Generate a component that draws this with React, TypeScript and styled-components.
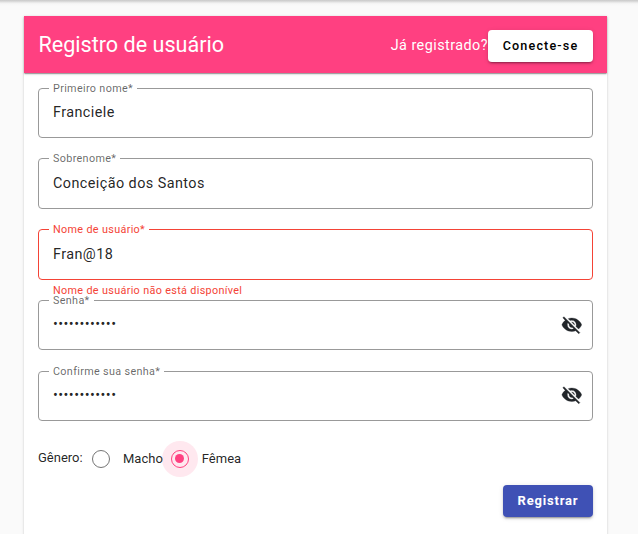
import React from "react";
import styled, { createGlobalStyle } from "styled-components";

const GlobalStyle = createGlobalStyle`
  *, *::before, *::after { box-sizing: border-box; }
  html, body { margin: 0; height: 100%; overflow: hidden; }
  body {
    background: #fafafa;
    color: rgba(0, 0, 0, 0.87);
    font-family: Roboto, "Open Sans", sans-serif;
  }
`;

const Page = styled.div`
  height: 534px;
  padding: 16px 31px 0 24px;
  overflow: hidden;
  background: linear-gradient(#cacaca 0, #d3d3d3 1px, #e2e2e2 2px, #f0f0f0 3px, #f7f7f7 4px, #fafafa 6px);
`;

const Card = styled.main`
  height: 560px;
  background: #fff;
  box-shadow: 0 2px 1px -1px rgba(0, 0, 0, 0.2), 0 1px 1px rgba(0, 0, 0, 0.14), 0 1px 3px rgba(0, 0, 0, 0.12);
`;

const Header = styled.header`
  height: 57px;
  padding: 2px 14px 0 14.4px;
  display: flex;
  align-items: center;
  background: #ff4081;
  color: #fff;
  box-shadow: 0 2px 1px -1px rgba(0, 0, 0, 0.2), 0 1px 1px rgba(0, 0, 0, 0.14), 0 1px 3px rgba(0, 0, 0, 0.12);
`;

const Title = styled.h1`
  margin: -2px auto 0 0;
  font-size: 21.6px;
  font-weight: 400;
  line-height: 29px;
`;

const Prompt = styled.span`
  font-size: 14.4px;
  letter-spacing: 0.45px;
`;

const Button = styled.button<{ $primary?: boolean }>`
  flex: none;
  width: ${(p) => (p.$primary ? 90 : 105)}px;
  height: 32px;
  padding: 0;
  border: 0;
  border-radius: 4px;
  background: ${(p) => (p.$primary ? "#3f51b5" : "#fff")};
  color: ${(p) => (p.$primary ? "#fff" : "#000")};
  font-family: inherit;
  font-size: ${(p) => (p.$primary ? 13 : 12.6)}px;
  font-weight: ${(p) => (p.$primary ? 700 : 500)};
  letter-spacing: ${(p) => (p.$primary ? 0.8 : 1.15)}px;
  box-shadow: 0 3px 1px -2px rgba(0, 0, 0, 0.2), 0 2px 2px rgba(0, 0, 0, 0.14), 0 1px 5px rgba(0, 0, 0, 0.12);
`;

const Form = styled.form`
  padding: 14.6px 14px 0;
`;

const Fields = styled.div`
  display: grid;
  grid-auto-rows: 70.8px;
`;

const Outline = styled.fieldset<{ $error?: boolean }>`
  min-width: 0;
  height: 50.4px;
  margin: 0;
  padding: 0 10px;
  border: 1px solid ${(p) => (p.$error ? "#f44336" : "#999")};
  border-radius: 4px;
  color: ${(p) => (p.$error ? "#f44336" : "rgba(0, 0, 0, 0.6)")};
`;

const Legend = styled.legend`
  height: 1px;
  padding: 0 4px;
  font-size: 10.8px;
  line-height: 1px;
  letter-spacing: 0.34px;
  white-space: nowrap;
`;

const Control = styled.div`
  display: flex;
  align-items: center;
  height: 47.8px;
  padding: 0 0 0 4px;
`;

const Input = styled.input`
  flex: 1;
  min-width: 0;
  height: 22px;
  padding: 0;
  border: 0;
  outline: 0;
  background: transparent;
  color: rgba(0, 0, 0, 0.87);
  font-family: inherit;
  font-size: 14.4px;
  letter-spacing: 0.43px;
`;

const EyeIcon = styled.svg`
  flex: none;
  width: 21.6px;
  height: 21.6px;
  margin: -1px -0.4px 0 0;
  fill: #212529;
  stroke: #212529;
  stroke-width: 0.35;
`;

const ErrorText = styled.div`
  padding: 4px 15px 0;
  color: #f44336;
  font-size: 10.8px;
  line-height: 13px;
  letter-spacing: 0.34px;
`;

const GenderRow = styled.div`
  display: flex;
  align-items: center;
  height: 36px;
  margin-top: -0.6px;
  font-size: 13px;
`;

const GenderLabel = styled.span`
  width: 45px;
  padding-bottom: 3px;
  white-space: nowrap;
`;

const Option = styled.label`
  display: flex;
  align-items: center;
`;

const Ripple = styled.span<{ $checked?: boolean }>`
  display: grid;
  place-items: center;
  width: 36px;
  height: 36px;
  margin-left: ${(p) => (p.$checked ? -1 : 0)}px;
  border-radius: 50%;
  background: ${(p) => (p.$checked ? "#ffe8ef" : "transparent")};
`;

const Radio = styled.input`
  appearance: none;
  display: grid;
  place-items: center;
  width: 18px;
  height: 18px;
  margin: 0;
  border: 1px solid #757575;
  border-radius: 50%;
  &:checked { border-color: #ff4081; }
  &:checked::before {
    content: "";
    width: 9px;
    height: 9px;
    border-radius: 50%;
    background: #ff4081;
  }
`;

const OptionText = styled.span`
  position: relative;
  padding-left: 4px;
`;

const Actions = styled.div`
  display: flex;
  justify-content: flex-end;
  margin-top: 8px;
`;

type Field = { label: string; value: string; error?: string; secret?: boolean };

const fields: Field[] = [
  { label: "Primeiro nome*", value: "Franciele" },
  { label: "Sobrenome*", value: "Conceição dos Santos" },
  { label: "Nome de usuário*", value: "Fran@18", error: "Nome de usuário não está disponível" },
  { label: "Senha*", value: "abcdefghijkl", secret: true },
  { label: "Confirme sua senha*", value: "abcdefghijkl", secret: true },
];

function VisibilityOff() {
  return (
    <EyeIcon viewBox="0 0 24 24" aria-hidden="true">
      <path d="M12 7c2.76 0 5 2.24 5 5 0 .65-.13 1.26-.36 1.83l2.92 2.92c1.51-1.26 2.7-2.89 3.43-4.75-1.73-4.39-6-7.5-11-7.5-1.4 0-2.74.25-3.98.7l2.16 2.16C10.74 7.13 11.35 7 12 7zM2 4.27l2.28 2.28.46.46C3.08 8.3 1.78 10.02 1 12c1.73 4.39 6 7.5 11 7.5 1.55 0 3.03-.3 4.38-.84l.42.42L19.73 22 21 20.73 3.27 3 2 4.27zM7.53 9.8l1.55 1.55c-.05.21-.08.43-.08.65 0 1.66 1.34 3 3 3 .22 0 .44-.03.65-.08l1.55 1.55c-.67.33-1.41.53-2.2.53-2.76 0-5-2.24-5-5 0-.79.2-1.53.53-2.2zm4.31-.78l3.15 3.15.02-.16c0-1.66-1.34-3-3-3l-.17.01z" />
    </EyeIcon>
  );
}

export default function App() {
  return (
    <>
      <GlobalStyle />
      <Page>
        <Card>
          <Header>
            <Title>Registro de usuário</Title>
            <Prompt>Já registrado?</Prompt>
            <Button type="button">Conecte-se</Button>
          </Header>
          <Form>
            <Fields>
              {fields.map((f) => (
                <div key={f.label}>
                  <Outline $error={!!f.error}>
                    <Legend>{f.label}</Legend>
                    <Control>
                      <Input type={f.secret ? "password" : "text"} aria-label={f.label} defaultValue={f.value} />
                      {f.secret && <VisibilityOff />}
                    </Control>
                  </Outline>
                  {f.error && <ErrorText>{f.error}</ErrorText>}
                </div>
              ))}
            </Fields>
            <GenderRow>
              <GenderLabel>Gênero:</GenderLabel>
              <Option>
                <Ripple><Radio type="radio" name="gender" /></Ripple>
                <OptionText>Macho</OptionText>
              </Option>
              <Option>
                <Ripple $checked><Radio type="radio" name="gender" defaultChecked /></Ripple>
                <OptionText>Fêmea</OptionText>
              </Option>
            </GenderRow>
            <Actions>
              <Button type="button" $primary>Registrar</Button>
            </Actions>
          </Form>
        </Card>
      </Page>
    </>
  );
}
